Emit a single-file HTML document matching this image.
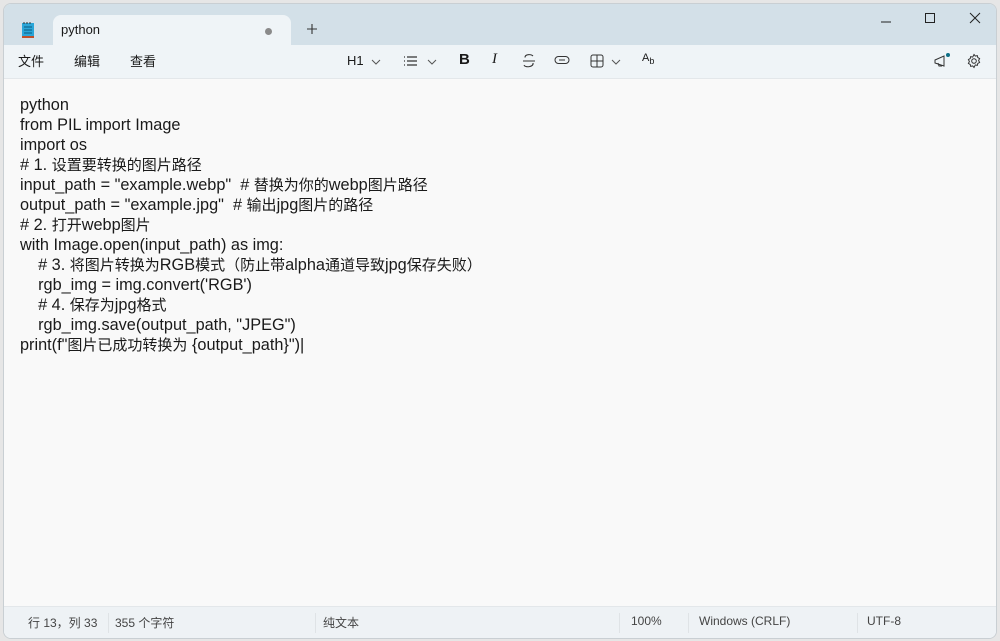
<!DOCTYPE html>
<html><head><meta charset="utf-8"><style>
*{margin:0;padding:0;box-sizing:border-box}
body{width:1000px;height:641px;background:#e6e6e6;position:relative;overflow:hidden;font-family:"Segoe UI","Liberation Sans","Noto Sans CJK SC",sans-serif}
.win{position:absolute;left:3px;top:3px;width:994px;height:636px;border-radius:8px;overflow:hidden;border:1px solid #c9cfd3;background:#f9f9f9}
.title{position:absolute;left:0;top:0;width:100%;height:41px;background:#d3e0e8}
.tab{position:absolute;left:49px;top:11px;width:238px;height:34px;background:#eff4f7;border-radius:8px 8px 0 0;font-size:13px;color:#1a1a1a}
.tab span{position:absolute;left:8px;top:7px}
.tab .dot{position:absolute;left:212px;top:13px;width:7px;height:7px;border-radius:50%;background:#8a8a8a}
.tool{position:absolute;left:0;top:41px;width:100%;height:34px;background:#eff4f7;border-bottom:1px solid #e3e7ea}
.menu{position:absolute;top:6px;font-size:13px;color:#1a1a1a}
.ed{position:absolute;left:16px;top:91px;font-size:16.3px;color:#1a1a1a;font-family:"Liberation Sans","Noto Sans CJK SC",sans-serif}
.ed div{height:20px;line-height:20px;white-space:pre}
.ed i{font-style:normal;font-size:15px;line-height:1}
.status{position:absolute;left:0;bottom:0;width:100%;height:32px;background:#eef2f5;border-top:1px solid #e3e7ea;font-size:12px;color:#444}
.status span{position:absolute;top:7px}
.sep{position:absolute;top:6px;width:1px;height:20px;background:#dfe3e6}
svg{position:absolute}
</style></head><body>
<div class="win">
<div class="title">
<svg style="left:17px;top:17px" width="14" height="18" viewBox="0 0 14 18"><rect x="1" y="2" width="12" height="14" fill="#2aa6d8"/><rect x="1" y="15" width="12" height="2" fill="#c0502a"/><path d="M3 6h8M3 9h8M3 12h8" stroke="#0b5b80" stroke-width="1"/><path d="M3 1v2M6 1v2M9 1v2" stroke="#333" stroke-width="1"/></svg>
<div class="tab"><span>python</span><div class="dot"></div></div>
<svg style="left:302px;top:19px" width="12" height="12"><path d="M6 1v10M1 6h10" stroke="#333" stroke-width="1.1"/></svg>
<svg style="left:876px;top:12px" width="12" height="12"><path d="M1 6h10" stroke="#222"/></svg>
<svg style="left:920px;top:8px" width="12" height="12"><rect x="1.5" y="1.5" width="9" height="9" fill="none" stroke="#222"/></svg>
<svg style="left:965px;top:8px" width="12" height="12"><path d="M1 1l10 10M11 1L1 11" stroke="#222"/></svg>
</div>
<div class="tool">
<span class="menu" style="left:14px">文件</span><span class="menu" style="left:70px">编辑</span><span class="menu" style="left:126px">查看</span>
<span class="menu" style="left:343px;top:8px;font-size:13px">H1</span>
<svg style="left:367px;top:13px" width="10" height="8"><path d="M1 2l4 4 4-4" fill="none" stroke="#555"/></svg>
<svg style="left:399px;top:11px" width="16" height="10"><path d="M1 1h1M1 5h1M1 9h1M4 1h10M4 5h10M4 9h10" stroke="#333" stroke-width="1.2"/></svg>
<svg style="left:423px;top:13px" width="10" height="8"><path d="M1 2l4 4 4-4" fill="none" stroke="#555"/></svg>
<span class="menu" style="left:455px;top:6px;font-weight:bold;font-size:15px">B</span>
<span class="menu" style="left:488px;top:6px;font-style:italic;font-size:15px;font-family:'Liberation Serif',serif">I</span>
<svg style="left:518px;top:8px" width="14" height="16"><path d="M11 3C9 1 3 1 3 4.5M1 8h12M11 10c1 4-8 5-9 2" fill="none" stroke="#333" stroke-width="1.1"/></svg>
<svg style="left:550px;top:10px" width="16" height="10"><rect x="1" y="1.5" width="14" height="7" rx="3.5" fill="none" stroke="#333"/><path d="M5 5h6" stroke="#333"/></svg>
<svg style="left:586px;top:9px" width="14" height="14"><rect x="1" y="1" width="12" height="12" rx="2" fill="none" stroke="#333"/><path d="M7 1v12M1 7h12" stroke="#333"/></svg>
<svg style="left:607px;top:13px" width="10" height="8"><path d="M1 2l4 4 4-4" fill="none" stroke="#555"/></svg>
<span class="menu" style="left:638px;top:7px;font-size:11px">A<sub style="font-size:9px">b</sub></span>
<svg style="left:929px;top:7px" width="18" height="18"><path d="M2 8l9-4v10l-9-3z M5 11l1 3h3" fill="none" stroke="#333"/><circle cx="15" cy="3" r="2" fill="#0f6f86"/></svg>
<svg style="left:962px;top:8px" width="16" height="16" viewBox="0 0 16 16"><circle cx="8" cy="8" r="2.3" fill="none" stroke="#333"/><path d="M8 1.5l1.3 1.6 2-.5.5 2 1.8 1-1 1.9 1 1.9-1.8 1-.5 2-2-.5L8 14.5l-1.3-1.6-2 .5-.5-2-1.8-1 1-1.9-1-1.9 1.8-1 .5-2 2 .5z" fill="none" stroke="#333" stroke-width="1"/></svg>
</div>
<div class="ed">
<div>python</div>
<div>from PIL import Image</div>
<div>import os</div>
<div># 1. <i>设置要转换的图片路径</i></div>
<div>input_path = "example.webp"  # <i>替换为你的</i>webp<i>图片路径</i></div>
<div>output_path = "example.jpg"  # <i>输出</i>jpg<i>图片的路径</i></div>
<div># 2. <i>打开</i>webp<i>图片</i></div>
<div>with Image.open(input_path) as img:</div>
<div>    # 3. <i>将图片转换为</i>RGB<i>模式（防止带</i>alpha<i>通道导致</i>jpg<i>保存失败）</i></div>
<div>    rgb_img = img.convert('RGB')</div>
<div>    # 4. <i>保存为</i>jpg<i>格式</i></div>
<div>    rgb_img.save(output_path, "JPEG")</div>
<div>print(f"<i>图片已成功转换为</i> {output_path}")|</div>
</div>
<div class="status">
<span style="left:24px">行 13，列 33</span><div class="sep" style="left:104px"></div>
<span style="left:111px">355 个字符</span><div class="sep" style="left:311px"></div>
<span style="left:319px">纯文本</span><div class="sep" style="left:615px"></div>
<span style="left:627px">100%</span><div class="sep" style="left:684px"></div>
<span style="left:695px">Windows (CRLF)</span><div class="sep" style="left:853px"></div>
<span style="left:863px">UTF-8</span>
</div>
</div>
</body></html>
